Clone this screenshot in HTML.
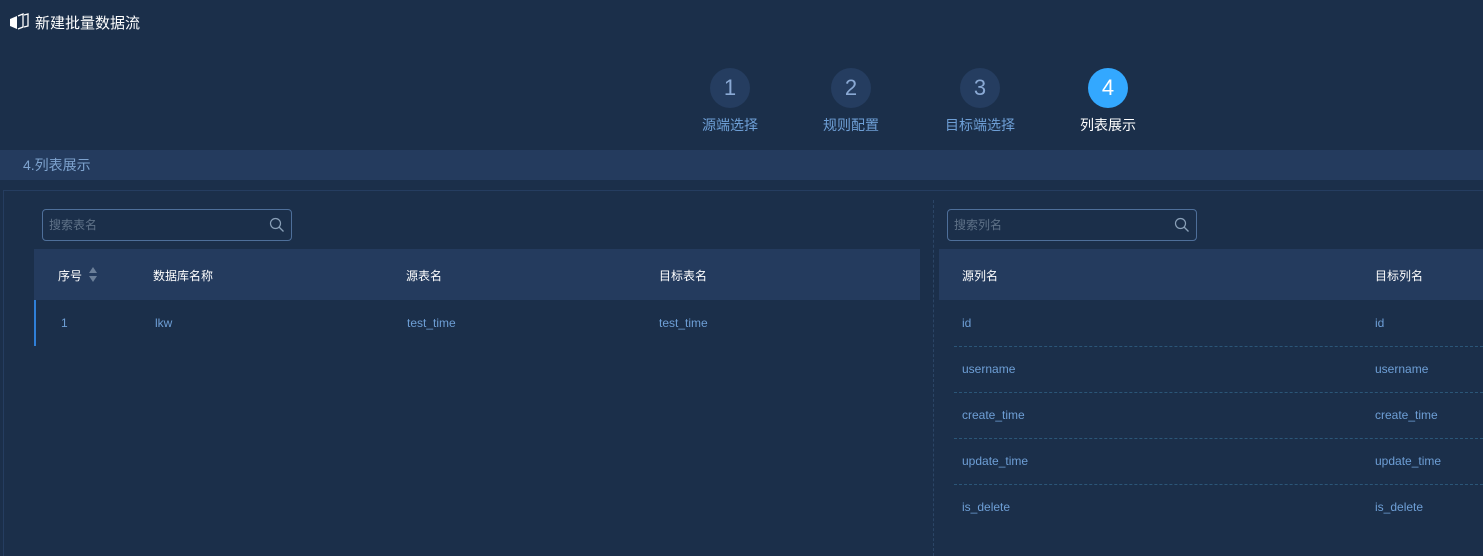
<!DOCTYPE html>
<html><head><meta charset="utf-8"><style>
*{margin:0;padding:0;box-sizing:border-box}
body{width:1483px;height:556px;overflow:hidden;background:#1b2f4a;font-family:"Liberation Sans","Noto Sans CJK SC",sans-serif;position:relative;color:#6e9fd6}
.a{position:absolute}
.title{left:35px;top:12px;font-size:15px;color:#fff}
.step{position:absolute;top:68px;width:120px;text-align:center}
.c{width:40px;height:40px;border-radius:50%;background:#253d60;margin:0 auto;color:#8aa9d4;font-size:22px;line-height:40px}
.step .t{font-size:14px;margin-top:7px;color:#6e9fd6}
.bar{left:0;top:150px;width:1483px;height:30px;background:#243b5e;font-size:14px;line-height:30px;padding-left:23px;color:#7ea3cf}
.panel{left:3px;top:190px;width:1480px;height:366px;border:1px solid #253d60;border-right:none;border-bottom:none}
.search{height:32px;border:1px solid #4e6f9a;border-radius:4px;font-size:12px;color:#5f7288;line-height:30px;padding-left:6px}
.search svg{position:absolute;right:6px;top:7px}
.hdr{height:51px;background:#243b5e;color:#fff;font-size:12px;line-height:51px}
.cell{position:absolute;font-size:12px}
.sep{position:absolute;left:954px;width:529px;border-top:1px dashed #2b5678}
</style></head><body>
<svg class="a" style="left:9px;top:13px" width="20" height="18" viewBox="0 0 20 18"><path d="M1 6 L8 3 L8 16 L1 13Z" fill="#fff"/><path d="M9 3 L14 1 L14 14 L9 16" fill="none" stroke="#fff" stroke-width="1.3"/><path d="M15 2 L19 1 L19 13 L15 14" fill="none" stroke="#fff" stroke-width="1.3"/></svg>
<div class="a title">新建批量数据流</div>
<div class="step" style="left:670px"><div class="c">1</div><div class="t">源端选择</div></div>
<div class="step" style="left:791px"><div class="c">2</div><div class="t">规则配置</div></div>
<div class="step" style="left:920px"><div class="c">3</div><div class="t">目标端选择</div></div>
<div class="step" style="left:1048px"><div class="c" style="background:#33a8ff;color:#fff">4</div><div class="t" style="color:#fff">列表展示</div></div>
<div class="a bar">4.列表展示</div>
<div class="a panel"></div>
<div class="a search" style="left:42px;top:209px;width:250px">搜索表名<svg width="16" height="16" viewBox="0 0 16 16"><circle cx="6.5" cy="6.5" r="5" fill="none" stroke="#8aa0b8" stroke-width="1.2"/><path d="M10 10L14.5 14.5" stroke="#8aa0b8" stroke-width="1.3"/></svg></div>
<div class="a search" style="left:947px;top:209px;width:250px">搜索列名<svg width="16" height="16" viewBox="0 0 16 16"><circle cx="6.5" cy="6.5" r="5" fill="none" stroke="#8aa0b8" stroke-width="1.2"/><path d="M10 10L14.5 14.5" stroke="#8aa0b8" stroke-width="1.3"/></svg></div>
<div class="a hdr" style="left:34px;top:249px;width:886px"></div>
<div class="cell" style="left:58px;top:267px;color:#fff">序号</div>
<svg class="a" style="left:89px;top:267px" width="8" height="15" viewBox="0 0 8 15"><path d="M4 0L8 6H0Z M4 15L8 9H0Z" fill="#6b7f99"/></svg>
<div class="cell" style="left:153px;top:267px;color:#fff">数据库名称</div>
<div class="cell" style="left:406px;top:267px;color:#fff">源表名</div>
<div class="cell" style="left:659px;top:267px;color:#fff">目标表名</div>
<div class="a" style="left:34px;top:300px;width:2px;height:46px;background:#2f7fd8"></div>
<div class="cell" style="left:61px;top:316px">1</div>
<div class="cell" style="left:155px;top:316px">lkw</div>
<div class="cell" style="left:407px;top:316px">test_time</div>
<div class="cell" style="left:659px;top:316px">test_time</div>
<div class="a" style="left:933px;top:200px;height:356px;border-left:1px dashed #2b4566"></div>
<div class="a hdr" style="left:939px;top:249px;width:544px"></div>
<div class="cell" style="left:962px;top:267px;color:#fff">源列名</div>
<div class="cell" style="left:1375px;top:267px;color:#fff">目标列名</div>
<div class="cell" style="left:962px;top:316px">id</div><div class="cell" style="left:1375px;top:316px">id</div>
<div class="sep" style="top:346px"></div>
<div class="cell" style="left:962px;top:362px">username</div><div class="cell" style="left:1375px;top:362px">username</div>
<div class="sep" style="top:392px"></div>
<div class="cell" style="left:962px;top:408px">create_time</div><div class="cell" style="left:1375px;top:408px">create_time</div>
<div class="sep" style="top:438px"></div>
<div class="cell" style="left:962px;top:454px">update_time</div><div class="cell" style="left:1375px;top:454px">update_time</div>
<div class="sep" style="top:484px"></div>
<div class="cell" style="left:962px;top:500px">is_delete</div><div class="cell" style="left:1375px;top:500px">is_delete</div>
</body></html>
